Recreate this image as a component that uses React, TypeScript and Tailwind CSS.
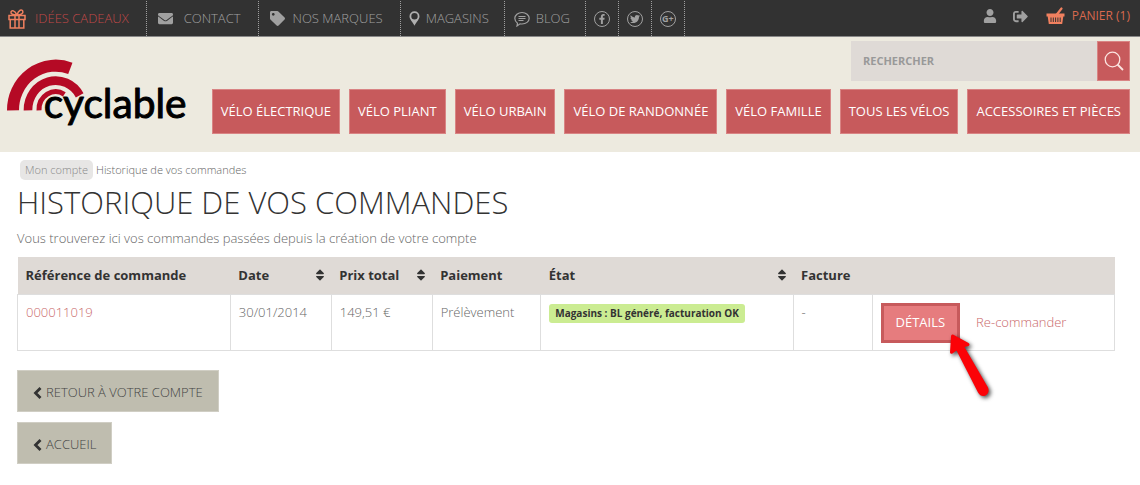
import type { ReactNode } from "react";
import {
  FaEnvelope,
  FaFacebookF,
  FaSignOutAlt,
  FaSort,
  FaTag,
  FaTwitter,
  FaUser,
} from "react-icons/fa";

function GiftIcon() {
  return (
    <svg width="18" height="20" viewBox="0 0 18 20" fill="none" stroke="#f0805f" strokeWidth="1.5" aria-hidden="true">
      <path d="M1 6.500h16v4H1zM2.200 10.500v8.500h13.600v-8.500M7 6.500v12.500M11 6.500v12.500" />
      <path d="M8.500 6C5 6 2.500 5 3 3s4-2 5.800 3M9.500 6C13 6 15.500 4.500 14.800 2.200S10.500.8 9 6" />
    </svg>
  );
}

function PinIcon() {
  return (
    <svg width="11" height="15" viewBox="0 0 11 15" aria-hidden="true">
      <path
        d="M5.500.3a5 5 0 0 0-5 5c0 3.200 3 5.500 5 9.500 2-4 5-6.300 5-9.500a5 5 0 0 0-5-5zm0 1.700a3.200 3.200 0 1 1 0 6.400 3.200 3.200 0 0 1 0-6.400z"
        fill="#b0b0b0"
        fillRule="evenodd"
      />
    </svg>
  );
}

function SpeechIcon() {
  return (
    <svg width="16" height="16" viewBox="0 0 16 16" fill="none" stroke="#a0a0a0" strokeWidth="1.200" aria-hidden="true">
      <path d="M3.500 12.200C1.800 11 .8 9.300.8 7.300.8 4 4 1.500 8 1.500s7.200 2.500 7.200 5.800S12 13 8 13c-.8 0-1.400 0-2-.2L3 15z" />
      <path d="M4.500 5.500h7M4.500 7.500h7M4.500 9.500h5" />
    </svg>
  );
}

function BasketIcon() {
  return (
    <svg width="19" height="18" viewBox="0 0 19 18" aria-hidden="true">
      <path d="M15.500 1.500 10 8.500" stroke="#f0805f" strokeWidth="2.200" strokeLinecap="round" />
      <path d="M.5 6.500h18v3h-1.200L16.200 17H2.800L1.700 9.500H.5z" fill="#f0805f" />
      <path d="M5 10.500v4.500M7.300 10.500v4.500M9.600 10.500v4.500M11.900 10.500v4.500M14.200 10.500v4.500" stroke="#333" strokeWidth="1" />
    </svg>
  );
}

function SearchIcon() {
  return (
    <svg width="20" height="20" viewBox="0 0 20 20" fill="none" stroke="#fbe4e0" strokeWidth="1.300" aria-hidden="true">
      <circle cx="8.500" cy="8.500" r="7.300" />
      <path d="m13.500 13.500 5.500 5.500" strokeWidth="1.800" />
    </svg>
  );
}

function BackIcon() {
  return (
    <svg width="9" height="12" viewBox="0 0 9 12" fill="none" stroke="#333" strokeWidth="2.800" aria-hidden="true">
      <path d="M7.500 1 2.500 6l5 5" />
    </svg>
  );
}

function Logo() {
  return (
    <svg width="190" height="80" viewBox="0 30 570 240" role="img" aria-label="cyclable">
      <g fill="none" stroke="#b50a25">
        <path d="M39 199A128 133 0 0 1 211 73" strokeWidth="36" />
        <path d="M84 199A83 88 0 0 1 239 154" strokeWidth="26" />
        <path d="M117 199A50 54 0 0 1 193 151" strokeWidth="15" />
      </g>
      <text
        x="131"
        y="222"
        fontSize="122"
        fontFamily="Lato, sans-serif"
        fontWeight="400"
        fill="#000"
        stroke="#000"
        strokeWidth="3"
        strokeLinejoin="round"
      >
        cyclable
      </text>
    </svg>
  );
}

function Arrow() {
  return (
    <svg
      className="pointer-events-none absolute top-[31px] left-16 drop-shadow-[2px_2px_2px_rgba(0,0,0,0.7)]"
      width="50"
      height="70"
      viewBox="0 0 50 70"
      aria-hidden="true"
    >
      <path
        d="M8 .5Q6 0 6 2.500L5 18.500Q5.500 20.500 7.500 19.500L11.500 16.500 33 58.500Q36 63.500 40.500 61.500 45 59 43 53.500L19.500 13 23.500 12Q25.500 10.500 23.500 9Z"
        fill="#fb0207"
      />
    </svg>
  );
}

const circle = "flex size-4 items-center justify-center rounded-full border border-[#a0a0a0] text-[10px]";

const links: { label: string; icon: ReactNode; style: string }[] = [
  { label: "Idées cadeaux", icon: <GiftIcon />, style: "gap-[9px] pr-[17px] pl-2 text-[#c04848]" },
  { label: "Contact", icon: <FaEnvelope className="size-[15px]" />, style: "gap-[11px] pr-[17px] pl-[11px]" },
  { label: "Nos marques", icon: <FaTag className="size-[15px]" />, style: "gap-2 pr-[17px] pl-[11px]" },
  { label: "Magasins", icon: <PinIcon />, style: "gap-[6px] pr-[15px] pl-2" },
  { label: "Blog", icon: <SpeechIcon />, style: "gap-[6px] pr-[15px] pl-[9px]" },
];

const socials: { label: string; icon: ReactNode }[] = [
  { label: "Facebook", icon: <FaFacebookF /> },
  { label: "Twitter", icon: <FaTwitter /> },
  { label: "Google+", icon: <b className="text-[9px] leading-none font-bold">g+</b> },
];

const categories = [
  "Vélo électrique",
  "Vélo pliant",
  "Vélo urbain",
  "Vélo de randonnée",
  "Vélo famille",
  "Tous les vélos",
  "Accessoires et pièces",
];

const columns = [
  { label: "Référence de commande", width: "w-[19.4%]", sortable: false },
  { label: "Date", width: "w-[9.2%]", sortable: true },
  { label: "Prix total", width: "w-[9.2%]", sortable: true },
  { label: "Paiement", width: "w-[9.9%]", sortable: false },
  { label: "État", width: "w-[23%]", sortable: true },
  { label: "Facture", width: "w-[7.2%]", sortable: false },
  { label: "", width: "w-[22.1%]", sortable: false },
];

const cell = "border border-[#dedede] px-2 pt-2 pb-[7px] align-top";

export default function App() {
  return (
    <div className="bg-white font-['Open_Sans',sans-serif] text-[13px] font-light text-[#666]">
      <div className="flex h-[37px] items-stretch justify-between border-b border-[#888] bg-[#323232] text-[#a0a0a0]">
        <nav className="flex pt-px uppercase" aria-label="Liens">
          {links.map((link) => (
            <a
              key={link.label}
              href="#"
              className={`flex items-center border-r border-dotted border-[#a0a0a0] whitespace-nowrap ${link.style}`}
            >
              {link.icon}
              {link.label}
            </a>
          ))}
          {socials.map((s) => (
            <a key={s.label} href="#" aria-label={s.label} className="flex items-center border-r border-dotted border-[#a0a0a0] px-2">
              <span className={circle}>{s.icon}</span>
            </a>
          ))}
        </nav>
        <div className="flex items-center pr-[10px] pb-1">
          <a href="#" aria-label="Mon compte" className="mr-4">
            <FaUser className="size-[14px]" />
          </a>
          <a href="#" aria-label="Déconnexion" className="mr-[18px]">
            <FaSignOutAlt className="size-[15px]" />
          </a>
          <a href="#" className="flex items-center gap-[7px] text-[12px] font-normal text-[#d9694e]">
            <BasketIcon />
            PANIER (1)
          </a>
        </div>
      </div>

      <header className="flex items-end justify-between bg-[#edeadf] pt-1 pr-[10px] pb-[18px]">
        <a href="#" aria-label="cyclable">
          <Logo />
        </a>
        <div className="flex flex-col items-end gap-2">
          <form className="flex h-10" onSubmit={(e) => e.preventDefault()}>
            <input
              type="search"
              aria-label="Rechercher"
              placeholder="RECHERCHER"
              className="w-[246px] bg-[#dfdad6] px-3 text-[11px] font-bold outline-none placeholder:text-[#999]"
            />
            <button aria-label="Lancer la recherche" className="flex w-[33px] items-center justify-center border border-[#d98484] bg-[#c75a5c]">
              <SearchIcon />
            </button>
          </form>
          <nav className="flex gap-[9px]" aria-label="Catégories">
            {categories.map((c) => (
              <a
                key={c}
                href="#"
                className="flex h-[45px] items-center border border-[#d98484] bg-[#c75a5c] px-2 font-normal whitespace-nowrap text-white uppercase"
              >
                {c}
              </a>
            ))}
          </nav>
        </div>
      </header>

      <main className="pt-2 pr-[25px] pl-[17px]">
        <nav className="flex items-center gap-[3px] pl-[3px] text-[11px]" aria-label="Fil d'Ariane">
          <a href="#" className="rounded-[5px] bg-[#e7e6e5] px-[5px] leading-5 text-[#888]">
            Mon compte
          </a>
          <span>Historique de vos commandes</span>
        </nav>
        <h1 className="text-[31px] leading-[44px] text-[#333] uppercase">Historique de vos commandes</h1>
        <p className="mt-1 leading-5">Vous trouverez ici vos commandes passées depuis la création de votre compte</p>

        <table className="mt-[9px] w-full table-fixed border-collapse text-left">
          <thead className="bg-[#dfdad6] text-[#333]">
            <tr className="h-[37px]">
              {columns.map((c) => (
                <th key={c.label} className={`px-2 font-bold whitespace-nowrap ${c.width}`}>
                  <span className="flex items-center justify-between">
                    {c.label}
                    {c.sortable && <FaSort className="-mr-1 size-[14px]" />}
                  </span>
                </th>
              ))}
            </tr>
          </thead>
          <tbody>
            <tr>
              <td className={cell}>
                <a href="#" className="text-[#c9686a]">000011019</a>
              </td>
              <td className={cell}>30/01/2014</td>
              <td className={cell}>149,51 €</td>
              <td className={cell}>Prélèvement</td>
              <td className={cell}>
                <span className="inline-block rounded-[3px] bg-[#cbec92] px-[6px] text-[10px] leading-[19px] font-bold whitespace-nowrap text-[#333]">
                  Magasins : BL généré, facturation OK
                </span>
              </td>
              <td className={cell}>-</td>
              <td className={cell}>
                <div className="relative flex items-center gap-4">
                  <a href="#" className="flex h-10 items-center border-3 border-[#c75a5c] bg-[#e67c7e] px-3 font-normal text-white uppercase">
                    Détails
                  </a>
                  <a href="#" className="text-[#c9686a]">Re-commander</a>
                  <Arrow />
                </div>
              </td>
            </tr>
          </tbody>
        </table>

        <div className="mt-[19px] flex flex-col items-start gap-[10px] pb-5">
          {["Retour à votre compte", "Accueil"].map((label) => (
            <a
              key={label}
              href="#"
              className="flex h-[42px] items-center gap-1 border border-[#d0cec4] bg-[#bfbdaf] px-[15px] pt-1 text-[#444] uppercase"
            >
              <BackIcon />
              {label}
            </a>
          ))}
        </div>
      </main>
    </div>
  );
}
